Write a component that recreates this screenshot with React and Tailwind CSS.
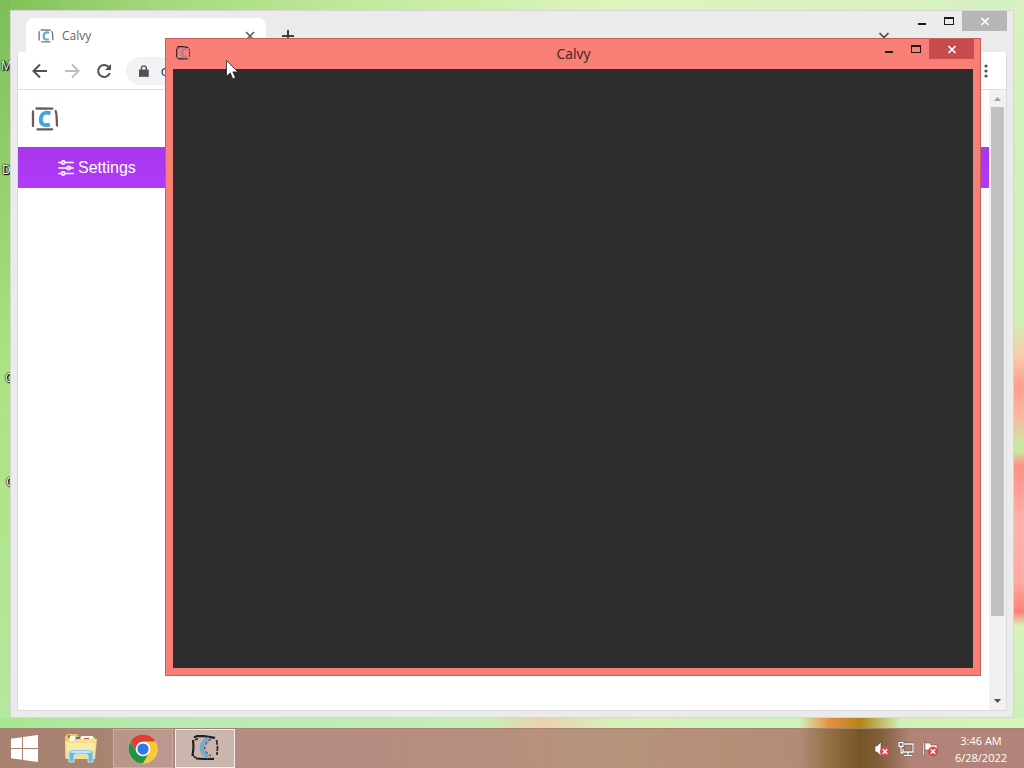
import React from "react";

function CalvyMark({ className, frame = "#6b5a60", letter = "#3fa6dc" }) {
  return (
    <svg className={className} viewBox="0 0 28 26" fill="none" aria-hidden="true">
      <path d="M5.500 2.500 L21.500 2.600 M6.500 23.400 H21 M2 5.500 L2 20 M24.600 5 Q25.600 7 25.700 12 L26 19.500" stroke={frame} strokeWidth="2.300" strokeLinecap="round" />
      <path d="M19.500 7.200 C14 5.500 10.300 7.500 9.800 13 C9.500 18.500 13 20 18.800 18.600" stroke={letter} strokeWidth="3.800" />
    </svg>
  );
}

function SketchMark({ className, letter = "#79a8c9", letterEdge = "#35516b" }) {
  return (
    <svg className={className} viewBox="0 0 30 28" fill="none" aria-hidden="true">
      <path d="M4 3.500 L7 2 L14 2.200 L25 3.800 M3 6 L3.500 13 L2.500 22 M6 24.500 L14 25 L24 24.800" stroke="#261e20" strokeWidth="2.200" />
      <path d="M26.500 6 L27.500 12 L27 21 M5 6 L8 4.500 M3.500 22 L6 24" stroke="#3a2c2d" strokeWidth="1.800" strokeDasharray="5 1" />
      <path d="M19 5 Q12.500 6.500 11.500 13.500 Q12 20 18.500 23" stroke={letter} strokeWidth="4" />
      <path d="M21 5 L17 8 L14.500 13 L16 18 L21 22" stroke={letterEdge} strokeWidth="1.200" strokeDasharray="3 2" />
    </svg>
  );
}

function WindowButtons({ closeClass }) {
  return (
    <div className="flex h-5 items-stretch text-[#1d1a1a]">
      <button aria-label="Minimize" className="flex w-7 justify-center">
        <svg className="h-5 w-5" viewBox="0 0 20 20"><path d="M6 12h8v2H6z" fill="currentColor" /></svg>
      </button>
      <button aria-label="Maximize" className="flex w-[26px] justify-center">
        <svg className="h-5 w-5" viewBox="0 0 20 20"><path d="M5 6h10v8H5zM6 8v5h8V8z" fill="currentColor" fillRule="evenodd" /></svg>
      </button>
      <button aria-label="Close" className={"flex w-[45px] items-center justify-center text-white " + closeClass}>
        <svg className="h-5 w-5" viewBox="0 0 20 20"><path d="M6.500 7l7 7m0-7l-7 7" stroke="currentColor" strokeWidth="1.700" /></svg>
      </button>
    </div>
  );
}

function BrowserWindow() {
  return (
    <section aria-label="Browser" className="absolute top-[10px] right-[10px] bottom-[10px] left-[10px] flex flex-col border border-[#d5d5d8] bg-[#ebebec] px-[6px] pb-[6px]">
      <div className="flex h-[41px] shrink-0 items-start">
        <div className="mt-[7px] ml-[9px] flex h-[34px] w-60 items-center rounded-t-lg bg-white pt-px pr-2.5 pl-3">
          <CalvyMark className="h-4 w-4 shrink-0" frame="#6c7378" letter="#68a8c8" />
          <span className="ml-2 flex-1 font-['Open_Sans',sans-serif] text-xs text-[#626367]">Calvy</span>
          <button aria-label="Close tab">
            <svg className="h-3 w-3" viewBox="0 0 12 12"><path d="M2 2l8 8m0-8l-8 8" stroke="#55565a" strokeWidth="1.500" /></svg>
          </button>
        </div>
        <button aria-label="New tab" className="mt-[17px] ml-[14px]">
          <svg className="h-4 w-4" viewBox="0 0 16 16"><path d="M8 2v12M2 8h12" stroke="#3e4043" strokeWidth="2" /></svg>
        </button>
        <button aria-label="Search tabs" className="mt-[17px] mr-4 ml-auto">
          <svg className="h-4 w-4" viewBox="0 0 16 16"><path d="M3.500 5l4.500 4.500L12.500 5" stroke="#47484b" strokeWidth="1.700" fill="none" /></svg>
        </button>
        <WindowButtons closeClass="bg-[#b6b6b7]" />
      </div>
      <div className="flex flex-1 flex-col border border-t-0 border-[#dcdcde] bg-white">
        <div className="flex h-[38px] shrink-0 items-center border-b border-[#dcdddf] pr-3 pl-3">
          <button aria-label="Back" className="w-8">
            <svg className="h-5 w-5" viewBox="0 0 20 20"><path d="M17 10H4M10 3.500L3.500 10l6.500 6.500" stroke="#505155" strokeWidth="2" fill="none" /></svg>
          </button>
          <button aria-label="Forward" className="w-8">
            <svg className="h-5 w-5" viewBox="0 0 20 20"><path d="M3 10h13M10 3.500l6.500 6.500-6.500 6.500" stroke="#bdbec0" strokeWidth="2" fill="none" /></svg>
          </button>
          <button aria-label="Reload" className="w-8">
            <svg className="h-5 w-5" viewBox="0 0 20 20"><path d="M15.800 12A6 6 0 1 1 14.500 5.800" stroke="#505155" strokeWidth="2" fill="none" /><path d="M17 3v6h-6z" fill="#505155" /></svg>
          </button>
          <label className="flex h-7 flex-1 items-center rounded-full bg-[#f0f2f4] pl-[13px]">
            <svg className="h-3 w-[10px]" viewBox="0 0 10 12" aria-hidden="true"><path d="M0 4.500h10V12H0z" fill="#505155" /><path d="M2.500 5V3a2.500 2.300 0 0 1 5 0v2" stroke="#505155" strokeWidth="1.400" fill="none" /></svg>
            <input aria-label="Address" defaultValue="c" className="ml-3 w-full bg-transparent font-['Open_Sans',sans-serif] text-sm text-[#333] outline-none" />
          </label>
          <button aria-label="Browser menu" className="ml-2">
            <svg className="h-4 w-4" viewBox="0 0 16 16" fill="#505155"><circle cx="8" cy="3" r="1.600" /><circle cx="8" cy="8" r="1.600" /><circle cx="8" cy="13" r="1.600" /></svg>
          </button>
        </div>
        <div className="flex flex-1">
          <div className="flex-1">
            <header className="flex h-[57px] items-center pl-[13px]">
              <CalvyMark className="h-[26px] w-7" />
            </header>
            <nav className="flex h-[41px] items-center bg-gradient-to-b from-[#a637ea] to-[#b13afb] pl-10">
              <a href="#settings" className="flex items-center gap-1 font-['Liberation_Sans',sans-serif] text-base text-white">
                <svg className="h-4 w-4" viewBox="0 0 16 16" fill="none" stroke="currentColor" strokeWidth="1.700" strokeLinecap="round" aria-hidden="true">
                  <path d="M.8 2.500h2.400M7.200 2.500h8M.8 8h7.900M12.700 8h2.500M.8 13.500h2.400M7.200 13.500h8" />
                  <circle cx="5.200" cy="2.500" r="1.600" /><circle cx="10.700" cy="8" r="1.600" /><circle cx="5.200" cy="13.500" r="1.600" />
                </svg>
                Settings
              </a>
            </nav>
          </div>
          <div className="flex w-[17px] flex-col items-center bg-[#f1f1f1]" aria-hidden="true">
            <svg className="h-[17px] w-[17px] shrink-0" viewBox="0 0 17 17"><path d="M5 11l3.500-4 3.500 4z" fill="#a0a0a0" /></svg>
            <div className="w-[13px] flex-[509] bg-[#c1c1c1]" />
            <div className="flex-[77]" />
            <svg className="h-[17px] w-[17px] shrink-0" viewBox="0 0 17 17"><path d="M5 6l3.500 4L12 6z" fill="#505050" /></svg>
          </div>
        </div>
      </div>
    </section>
  );
}

function CalvyWindow() {
  return (
    <section aria-label="Calvy" className="absolute top-[38px] right-[43px] bottom-[52px] left-[165px] flex flex-col border border-[#c75f5a] bg-[#f77f76] px-[7px] pb-[7px]">
      <div className="-mr-px grid h-[30px] shrink-0 grid-cols-[1fr_auto_1fr] items-start">
        <SketchMark className="mt-[6px] ml-[2px] h-4 w-4" letter="#b18195" letterEdge="#7d5a72" />
        <h1 className="mt-1 font-['Open_Sans',sans-serif] text-sm leading-[22px] text-[#402322]">Calvy</h1>
        <div className="ml-auto"><WindowButtons closeClass="bg-[#c94b4e]" /></div>
      </div>
      <div className="flex-1 bg-[#2d2d2d]" />
    </section>
  );
}

function DesktopLabel({ className, children }) {
  return (
    <span className={"absolute font-['Open_Sans',sans-serif] text-xs leading-4 text-white [text-shadow:0_0_1px_#000,0_0_2px_#000,1px_1px_1px_#000,1px_0_1px_#000] " + className}>{children}</span>
  );
}

function ErrorBadge() {
  return (
    <g>
      <circle cx="11" cy="10.500" r="5" fill="#d94b50" />
      <path d="M8.800 8.300l4.400 4.400m0-4.400l-4.400 4.400" stroke="#fff" strokeWidth="1.500" />
    </g>
  );
}

function Taskbar() {
  return (
    <footer className="flex h-10 shrink-0 items-stretch border-t border-[#a48370] bg-[linear-gradient(90deg,#a98372_0%,#a98372_10%,#b68b82_22%,#b68d7f_45%,#b7937c_60%,#b48b76_78%,#937046_81%,#765526_84%,#80603b_86%,#b28479_89%,#b28479_100%)]">
      <button aria-label="Start" className="flex w-12 items-center justify-center">
        <svg className="h-[27px] w-[27px]" viewBox="0 0 27 27" fill="#fff"><path d="M0 3.800L11 2.300V13H0zM12 2.100L27 0v13H12zM0 14h11v10.700L0 23.200zM12 14h15v13L12 24.900z" /></svg>
      </button>
      <button aria-label="File Explorer" className="flex w-[65px] items-center justify-center">
        <svg className="h-[31px] w-[34px]" viewBox="0 0 34 31">
          <path d="M1 4l2-3h10l2 3h16v21H1z" fill="#e9c568" />
          <path d="M5 3h6v6H5zM17 3h12v6H17z" fill="#fff7df" />
          <path d="M4 2h2v3H4z" fill="#4ba344" /><path d="M12 4h4v2h-4z" fill="#4378bd" /><path d="M20 5h5v2h-5z" fill="#c95543" />
          <path d="M1 8h10l3-2h19l-2 20H2z" fill="#f5df8c" />
          <path d="M3 10h28l-1 8H3z" fill="#faeaa4" />
          <path d="M5 29V20q0-3 3-3h18q3 0 3 3v9h-5v-6q0-2-2-2H12q-2 0-2 2v6z" fill="#69bbe6" stroke="#bde8f8" strokeWidth="1" />
          <path d="M7 19h20" stroke="#e1f6fc" strokeWidth="1.500" />
        </svg>
      </button>
      <button aria-label="Chrome" className="flex w-[60px] items-center justify-center border border-[#c9aea5] bg-white/15">
        <svg className="h-[30px] w-[30px]" viewBox="0 0 48 48">
          <circle cx="24" cy="24" r="23" fill="#fff" />
          <path d="M4.080 12.500A23 23 0 0 1 43.920 12.500H24A11.500 11.500 0 0 0 14.040 29.750z" fill="#e33b2e" />
          <path d="M43.920 12.500A23 23 0 0 1 24 47L33.960 29.750A11.500 11.500 0 0 0 24 12.500z" fill="#fcc934" />
          <path d="M24 47A23 23 0 0 1 4.080 12.500L14.040 29.750A11.500 11.500 0 0 0 33.960 29.750z" fill="#229342" />
          <circle cx="24" cy="24" r="11.500" fill="#fff" /><circle cx="24" cy="24" r="9" fill="#3077e8" />
        </svg>
      </button>
      <button aria-label="Calvy" className="ml-[2px] flex w-[60px] items-center justify-center border border-[#f6eeea] bg-[#cbb6ad] pb-[2px]">
        <SketchMark className="h-7 w-[30px]" />
      </button>
      <div className="ml-auto flex items-center gap-2 pt-px">
        <svg role="img" aria-label="Muted" className="h-4 w-4" viewBox="0 0 16 16"><path d="M1 5h2l4-4v14l-4-4H1z" fill="#fff" stroke="#5d4540" strokeWidth=".6" /><ErrorBadge /></svg>
        <svg role="img" aria-label="Network" className="h-4 w-4" viewBox="0 0 16 16" fill="none"><path d="M6 3h9v8H5V8M10 11v3M6 14.500h8M1 1.500h4v4H1zM3 6v6h2" stroke="#54403a" strokeWidth="2.600" /><path d="M6 3h9v8H5V8M10 11v3M6 14.500h8M1 1.500h4v4H1zM3 6v6h2" stroke="#fff" strokeWidth="1.300" /></svg>
        <svg role="img" aria-label="Action Center" className="h-4 w-4" viewBox="0 0 16 16"><path d="M1 1h1.500v14H1zM3 2h5l1 2h6v7H8L7 9H3z" fill="#fff" stroke="#5d4540" strokeWidth=".5" /><ErrorBadge /></svg>
      </div>
      <div className="mr-3 ml-3 w-[62px] pt-[3px] text-center font-['Open_Sans',sans-serif] text-[11px] leading-[17px] whitespace-nowrap text-white">
        <div>3:46 AM</div>
        <div>6/28/2022</div>
      </div>
    </footer>
  );
}

export default function App() {
  return (
    <div className="flex min-h-screen flex-col overflow-hidden bg-[#c9efb7]">
      <main className="relative flex-1 bg-[linear-gradient(90deg,#7fc156_0%,#a4d87b_15%,#c1ea9c_35%,#ddf5bd_60%,#d5f1c0_100%)]">
        <div className="absolute inset-y-0 left-0 w-[10px] bg-gradient-to-b from-[#7dbe57] via-[#ace381] to-[#b5e89d]">
          <DesktopLabel className="top-[58px] left-[1px]">M</DesktopLabel>
          <DesktopLabel className="top-[162px] left-[2px]">D</DesktopLabel>
          <DesktopLabel className="top-[370px] left-[5px]">C</DesktopLabel>
          <DesktopLabel className="top-[474px] left-[6px]">C</DesktopLabel>
        </div>
        <div className="absolute inset-y-0 right-0 w-[10px] bg-[linear-gradient(180deg,#d8f2c0_0%,#ceefb8_44%,#f7ccaa_49%,#ff9d8f_53%,#ffb5a2_57%,#c9e79e_61%,#c9e79e_62%,#ff9088_64%,#ffb3ae_72%,#ffaaa1_80%,#ff8176_84%,#d8f2bd_86%,#c9f0b9_100%)]" />
        <div className="absolute inset-x-0 bottom-0 h-[10px] bg-[linear-gradient(90deg,#a7e690_0%,#b9e9b2_15%,#c9edb8_48%,#ead2ac_53%,#d6f2ba_60%,#d0f3bc_78%,#e98e43_81%,#b18516_84%,#d1f1b9_88%,#d5f6bf_100%)]" />
        <BrowserWindow />
        <CalvyWindow />
        <svg className="absolute top-[60px] left-[226px] h-5 w-3" viewBox="0 0 12 20" aria-hidden="true"><path d="M.5.500v16l3.700-3.600 2.600 6 2.700-1.200-2.600-5.800h5z" fill="#fff" stroke="#222" strokeWidth=".8" /></svg>
      </main>
      <Taskbar />
    </div>
  );
}
